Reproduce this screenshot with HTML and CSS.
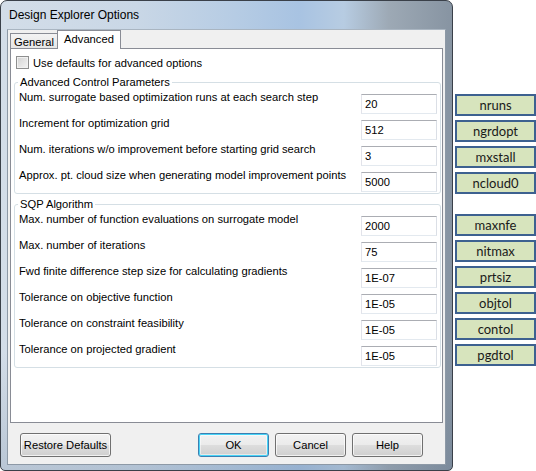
FILE: index.html
```html
<!DOCTYPE html>
<html>
<head>
<meta charset="utf-8">
<link rel="stylesheet" href="styles.css">
</head>
<body>
<div class="screen">
  <div class="window">
    <div class="titlebar">Design Explorer Options</div>
    <div class="client">
      <div class="tabs">
        <div class="tab">General</div>
        <div class="tab active">Advanced</div>
      </div>
      <div class="panel">
        <div class="check"><span class="box"></span><span>Use defaults for advanced options</span></div>
        <fieldset class="group first">
          <legend>Advanced Control Parameters</legend>
          <div class="row"><span class="lbl">Num. surrogate based optimization runs at each search step</span><span class="input">20</span></div>
          <div class="row"><span class="lbl">Increment for optimization grid</span><span class="input">512</span></div>
          <div class="row"><span class="lbl">Num. iterations w/o improvement before starting grid search</span><span class="input">3</span></div>
          <div class="row"><span class="lbl">Approx. pt. cloud size when generating model improvement points</span><span class="input">5000</span></div>
        </fieldset>
        <fieldset class="group second">
          <legend>SQP Algorithm</legend>
          <div class="row"><span class="lbl">Max. number of function evaluations on surrogate model</span><span class="input">2000</span></div>
          <div class="row"><span class="lbl">Max. number of iterations</span><span class="input">75</span></div>
          <div class="row"><span class="lbl">Fwd finite difference step size for calculating gradients</span><span class="input">1E-07</span></div>
          <div class="row"><span class="lbl">Tolerance on objective function</span><span class="input">1E-05</span></div>
          <div class="row"><span class="lbl">Tolerance on constraint feasibility</span><span class="input">1E-05</span></div>
          <div class="row"><span class="lbl">Tolerance on projected gradient</span><span class="input">1E-05</span></div>
        </fieldset>
      </div>
      <div class="buttons">
        <div class="btn restore">Restore Defaults</div>
        <div class="btn ok">OK</div>
        <div class="btn">Cancel</div>
        <div class="btn">Help</div>
      </div>
    </div>
  </div>
  <div class="side">
    <div class="tag">nruns</div>
    <div class="tag">ngrdopt</div>
    <div class="tag">mxstall</div>
    <div class="tag">ncloud0</div>
    <div class="tag gap">maxnfe</div>
    <div class="tag">nitmax</div>
    <div class="tag">prtsiz</div>
    <div class="tag">objtol</div>
    <div class="tag">contol</div>
    <div class="tag">pgdtol</div>
  </div>
</div>
</body>
</html>
```

FILE: styles.css
```css
* { box-sizing: border-box; }
html, body { margin: 0; padding: 0; background: #ffffff; }
body {
  font-family: "Liberation Sans", Arial, sans-serif;
  font-size: 11.2px;
  color: #000;
}
.screen { display: flex; align-items: flex-start; width: 536px; height: 471px; }

.window {
  width: 453px;
  height: 471px;
  border: 1px solid #3a4049;
  border-radius: 7px 7px 5px 5px;
  padding: 0 6px 5px 6px;
  background:
    linear-gradient(to bottom, rgba(255,255,255,0) 75%, rgba(70,95,125,0.18) 100%),
    linear-gradient(to right, #d3dde8 0%, #c9d7e6 30%, #b6cce4 52%, #a8c3e2 66%, #b7cce2 76%, #9da9b5 86%, #8794a2 100%);
}
.titlebar {
  height: 28px;
  line-height: 26px;
  padding-left: 2px;
  padding-top: 1px;
  font-size: 12px;
  white-space: nowrap;
}
.client {
  height: 436px;
  background: #f0f0f0;
  border: 1px solid #8d99a6;
  border-top-color: #a9b5c1;
  display: flex;
  flex-direction: column;
}

.tabs {
  display: flex;
  align-items: flex-end;
  height: 18px;
  padding-left: 2px;
  position: relative;
  z-index: 1;
}
.tab {
  height: 15px;
  width: 48px;
  border: 1px solid #898c95;
  border-bottom: none;
  background: linear-gradient(to bottom, #f3f3f3, #e6e6e6);
  line-height: 14px;
  text-align: center;
  padding-top: 1px;
}
.tab.active {
  height: 19px;
  width: 64px;
  margin-bottom: -1px;
  margin-left: -1px;
  background: #ffffff;
  padding-top: 1px;
  line-height: 15px;
}

.panel {
  height: 375px;
  margin: 0 2px;
  border: 1px solid #898c95;
  background: #ffffff;
  padding: 0 1px 0 3px;
}
.check {
  display: flex;
  align-items: flex-start;
  height: 14px;
  line-height: 14px;
  margin-top: 6px;
  margin-left: 2px;
  gap: 4px;
}
.check span:last-child { margin-top: 1px; }
.box {
  width: 13px;
  height: 13px;
  margin-top: 1px;
  border: 1px solid #8e8f8f;
  background: linear-gradient(135deg, #d2d2d2, #f4f4f4);
  box-shadow: inset 0 0 0 1px #f1f1f1;
}
.group {
  margin: 6px 0 0 0;
  border: 1px solid #d5dfe5;
  border-radius: 3px;
  padding: 5px 3px 1px 4px;
  min-width: 0;
}
.group.second { margin-top: 3px; }
.group legend {
  padding: 0 2px;
  margin-left: -1px;
  line-height: 14px;
}
.row {
  display: flex;
  justify-content: space-between;
  align-items: flex-start;
  height: 20px;
}
.row + .row { margin-top: 6px; }
.lbl { line-height: 14px; margin-top: -4px; white-space: nowrap; }
.input {
  flex: none;
  width: 76px;
  height: 20px;
  border: 1px solid;
  border-color: #abadb3 #dbdfe6 #e3e9ef #e2e3ea;
  background: #fff;
  padding-left: 3px;
  line-height: 18px;
}

.buttons {
  display: flex;
  margin-top: 10px;
  padding-left: 12px;
  gap: 6px;
}
.btn {
  width: 71px;
  height: 24px;
  border: 1px solid #707070;
  border-radius: 3px;
  background: linear-gradient(to bottom, #f2f2f2 0%, #ebebeb 48%, #dddddd 52%, #cfcfcf 100%);
  box-shadow: inset 0 0 0 1px rgba(255,255,255,0.7);
  text-align: center;
  line-height: 22px;
  white-space: nowrap;
}
.btn.restore { width: 91px; margin-right: 81px; }
.btn.ok {
  border-color: #3c7fb1;
  box-shadow: inset 0 0 0 1px #48d4f7, inset 0 0 0 2px rgba(255,255,255,0.5);
}

.side {
  margin-left: 2px;
  padding-top: 94px;
  display: flex;
  flex-direction: column;
  gap: 4px;
  width: 81px;
}
.tag {
  height: 22px;
  border: 2px solid #3d6190;
  background: #d7e4bd;
  font-family: "Lato", "Open Sans", sans-serif;
  font-size: 13px;
  line-height: 18px;
  text-align: center;
  color: #1a1a1a;
}
.tag.gap { margin-top: 16px; }
```
